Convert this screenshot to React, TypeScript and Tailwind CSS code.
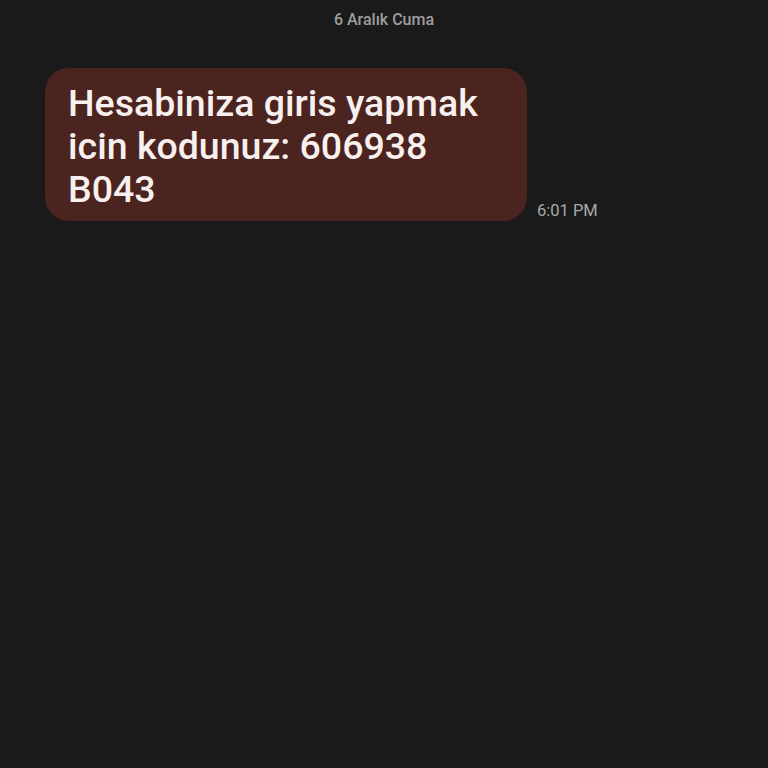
export default function App() {
  return (
    <div
      className="min-h-[768px] w-full bg-[#1a1a1a]"
      style={{ fontFamily: "Roboto, 'Liberation Sans', sans-serif" }}
    >
      <div className="pt-[10px] text-center text-[16px] font-medium leading-[20px] text-[#9e9e9e]">
        6 Aralık Cuma
      </div>
      <div className="mt-[38px] flex items-end pl-[45px]">
        <div className="w-[482px] rounded-[24px] bg-[#4b2420] pb-[10px] pl-[23px] pr-[20px] pt-[14px] text-[37.5px] font-medium leading-[43px] text-[#f7f0ee]">
          Hesabiniza giris yapmak
          <br />
          icin kodunuz: 606938
          <br />
          B043
        </div>
        <div className="mb-[-3px] ml-[10px] text-[16.5px] text-[#a8a8a8]">6:01 PM</div>
      </div>
    </div>
  );
}
